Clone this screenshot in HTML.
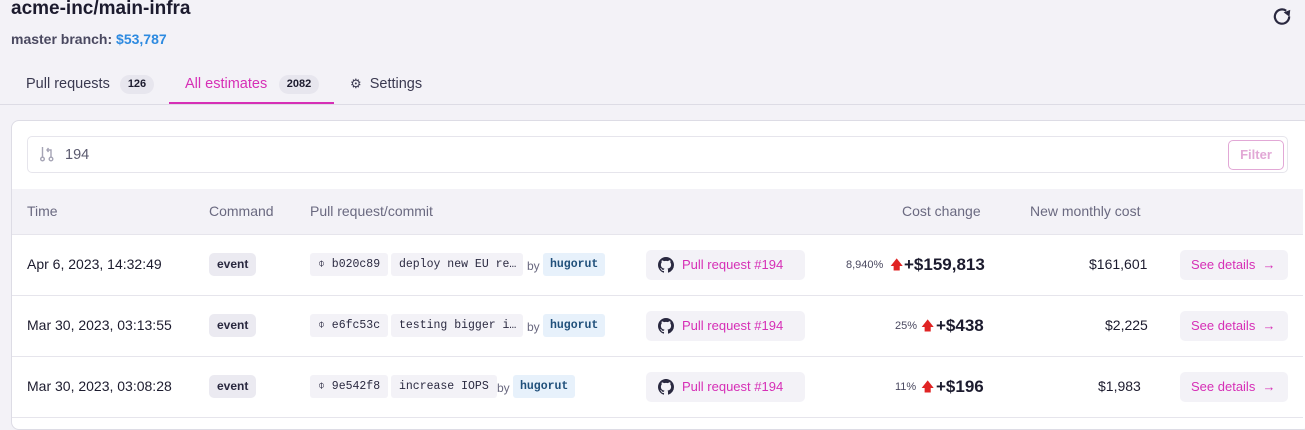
<!DOCTYPE html>
<html><head><style>
*{box-sizing:border-box;margin:0;padding:0}
body{width:1305px;height:420px;overflow:hidden;background:#f3f2f7;font-family:"Liberation Sans",sans-serif;color:#1c1b2e;position:relative}
.a{position:absolute;white-space:nowrap}
.mono{font-family:"Liberation Mono",monospace;font-size:11.5px;color:#2a2940}
.chip{position:absolute;background:#f3f2f7;border-radius:3px;height:23px;line-height:23px;padding:0 8px;white-space:nowrap;overflow:hidden}
.user{position:absolute;background:#e7f1fb;color:#1f4f7a;border-radius:3px;height:23px;line-height:23px;padding:0 7px;font-family:"Liberation Mono",monospace;font-size:11.5px;font-weight:bold}
.ev{position:absolute;left:209px;background:#ebeaf1;border-radius:5px;height:23px;line-height:23px;padding:0 8px;font-size:12px;font-weight:bold;color:#2a2940}
.pr{position:absolute;left:646px;width:159px;height:30px;background:#f3f2f7;border-radius:5px;color:#d62fb6;font-size:13px;line-height:30px;padding-left:36px}
.pr svg{position:absolute;left:12px;top:7px}
.sd{position:absolute;left:1180px;width:108px;height:30px;background:#f3f2f7;border-radius:5px;color:#d62fb6;font-size:13px;line-height:30px;padding-left:11px}
.row{position:absolute;left:12px;width:1291px;border-top:1px solid #e6e5ec}
</style></head><body>
<div class="a" style="left:11px;top:-2px;font-size:19px;font-weight:bold;color:#1c1b2e">acme-inc/main-infra</div>
<div class="a" style="left:11px;top:31px;font-size:14px;font-weight:bold;color:#4a4960">master branch: <span style="color:#2d8ae0">$53,787</span></div>
<svg class="a" style="left:1271px;top:6px" width="22" height="22" viewBox="0 0 20 20"><path d="M16.5 9.5A6.5 6.5 0 1 1 13.8 4.3" fill="none" stroke="#2a2940" stroke-width="2"/><path d="M11.5 5.8L17.5 3.5L16.8 9.8Z" fill="#2a2940"/></svg>
<div class="a" style="left:26px;top:76px;font-size:14.5px;color:#3a3950">Pull requests</div>
<div class="a" style="left:120px;top:75px;width:34px;height:19px;border-radius:10px;background:#e7e6ee;font-size:11px;font-weight:bold;text-align:center;line-height:19px">126</div>
<div class="a" style="left:185px;top:76px;font-size:14.5px;color:#d62fb6">All estimates</div>
<div class="a" style="left:279px;top:75px;width:40px;height:19px;border-radius:10px;background:#e7e6ee;font-size:11px;font-weight:bold;text-align:center;line-height:19px">2082</div>
<div class="a" style="left:169px;top:102px;width:165px;height:3px;background:#d62fb6"></div>
<div class="a" style="left:350px;top:76px;font-size:14.5px;color:#3a3950"><span style="font-size:13px">⚙</span>&nbsp; Settings</div>
<div class="a" style="left:0;top:104px;width:1305px;height:1px;background:#dddce5"></div>
<div class="a" style="left:11px;top:120px;width:1300px;height:310px;background:#fff;border:1px solid #dddce5;border-radius:8px"></div>
<div class="a" style="left:27px;top:136px;width:1261px;height:37px;border:1px solid #e6e5ec;border-radius:5px;background:#fff"></div>
<svg class="a" style="left:39px;top:145px" width="16" height="18" viewBox="0 0 16 18"><g fill="none" stroke="#a5a4b5" stroke-width="1.4"><circle cx="3.5" cy="14" r="1.8"/><circle cx="12" cy="14" r="1.8"/><path d="M3.5 2v10M12 12V5H8M9.5 3L8 5l1.5 2"/></g></svg>
<div class="a" style="left:65px;top:147px;font-size:14.5px;color:#5a596e">194</div>
<div class="a" style="left:1228px;top:140px;width:56px;height:30px;border:1px solid #e2a8d6;border-radius:5px;color:#e2a8d6;font-size:13px;font-weight:bold;text-align:center;line-height:28px">Filter</div>
<div class="a" style="left:12px;top:189px;width:1291px;height:45px;background:#f3f2f7"></div>
<div class="a" style="top:203px;left:27px;font-size:14px;color:#6a6980">Time</div>
<div class="a" style="top:203px;left:209px;font-size:14px;color:#6a6980">Command</div>
<div class="a" style="top:203px;left:310px;font-size:14px;color:#6a6980">Pull request/commit</div>
<div class="a" style="top:203px;left:902px;font-size:14px;color:#6a6980">Cost change</div>
<div class="a" style="top:203px;left:1030px;font-size:14px;color:#6a6980">New monthly cost</div>
<div class="row" style="top:234px"></div><div class="row" style="top:295px"></div><div class="row" style="top:356px"></div><div class="row" style="top:417px"></div>

<!-- row1 -->
<div class="a" style="left:27px;top:256px;font-size:14px">Apr 6, 2023, 14:32:49</div>
<div class="ev" style="top:253px">event</div>
<div class="chip mono" style="left:310px;top:253px">⌽ b020c89</div>
<div class="chip mono" style="left:391px;top:253px;width:132px">deploy new EU re…</div>
<div class="a" style="left:527px;top:259px;font-size:12px;color:#6a6980">by</div>
<div class="user" style="left:543px;top:253px">hugorut</div>
<div class="pr" style="top:250px"><svg width="16" height="16" viewBox="0 0 16 16"><path fill="#2a2940" d="M8 0C3.58 0 0 3.58 0 8c0 3.54 2.29 6.53 5.47 7.59.4.07.55-.17.55-.38v-1.33c-2.23.48-2.7-1.07-2.7-1.07-.36-.92-.89-1.17-.89-1.170-.73-.5.05-.49.05-.49.8.06 1.23.82 1.23.82.71 1.22 1.87.87 2.33.66.07-.52.28-.87.51-1.07-1.78-.2-3.64-.89-3.64-3.95 0-.87.31-1.590.82-2.15-.08-.2-.36-1.02.08-2.12 0 0 .67-.21 2.2.82A7.6 7.6 0 0 1 8 3.87c.68 0 1.36.09 2 .27 1.53-1.04 2.2-.82 2.2-.82.44 1.1.16 1.92.08 2.12.51.56.82 1.27.82 2.15 0 3.07-1.87 3.75-3.65 3.95.29.25.54.73.54 1.48v2.2c0 .21.15.46.55.38A8 8 0 0 0 16 8c0-4.42-3.58-8-8-8z"/></svg>Pull request #194</div>
<div class="a" style="left:846px;top:259px;font-size:11px;color:#4a4960">8,940%</div>
<div class="a" style="left:890px;top:256px;font-size:13px;color:#e02424">🡅</div>
<div class="a" style="left:904px;top:255px;font-size:17px;font-weight:bold">+$159,813</div>
<div class="a" style="left:1089px;top:256px;font-size:14px">$161,601</div>
<div class="sd" style="top:250px">See details &nbsp;→</div>

<!-- row2 -->
<div class="a" style="left:27px;top:317px;font-size:14px">Mar 30, 2023, 03:13:55</div>
<div class="ev" style="top:314px">event</div>
<div class="chip mono" style="left:310px;top:314px">⌽ e6fc53c</div>
<div class="chip mono" style="left:391px;top:314px;width:132px">testing bigger i…</div>
<div class="a" style="left:527px;top:320px;font-size:12px;color:#6a6980">by</div>
<div class="user" style="left:543px;top:314px">hugorut</div>
<div class="pr" style="top:311px"><svg width="16" height="16" viewBox="0 0 16 16"><path fill="#2a2940" d="M8 0C3.58 0 0 3.58 0 8c0 3.54 2.29 6.53 5.47 7.59.4.07.55-.17.55-.38v-1.33c-2.23.48-2.7-1.07-2.7-1.07-.36-.92-.89-1.17-.89-1.17-.73-.5.05-.49.05-.49.8.06 1.23.82 1.23.82.71 1.22 1.87.87 2.33.66.07-.52.28-.87.51-1.07-1.78-.2-3.64-.89-3.64-3.95 0-.87.31-1.59.82-2.15-.08-.2-.36-1.02.08-2.12 0 0 .67-.21 2.2.82A7.6 7.6 0 0 1 8 3.87c.68 0 1.36.09 2 .27 1.53-1.04 2.2-.82 2.2-.82.44 1.1.16 1.92.08 2.12.51.56.82 1.27.82 2.15 0 3.07-1.87 3.75-3.65 3.95.29.25.54.73.54 1.48v2.2c0 .21.15.46.55.38A8 8 0 0 0 16 8c0-4.42-3.58-8-8-8z"/></svg>Pull request #194</div>
<div class="a" style="left:895px;top:320px;font-size:11px;color:#4a4960">25%</div>
<div class="a" style="left:921px;top:317px;font-size:13px;color:#e02424">🡅</div>
<div class="a" style="left:936px;top:316px;font-size:17px;font-weight:bold">+$438</div>
<div class="a" style="left:1105px;top:317px;font-size:14px">$2,225</div>
<div class="sd" style="top:311px">See details &nbsp;→</div>

<!-- row3 -->
<div class="a" style="left:27px;top:378px;font-size:14px">Mar 30, 2023, 03:08:28</div>
<div class="ev" style="top:375px">event</div>
<div class="chip mono" style="left:310px;top:375px">⌽ 9e542f8</div>
<div class="chip mono" style="left:391px;top:375px">increase IOPS</div>
<div class="a" style="left:497px;top:381px;font-size:12px;color:#6a6980">by</div>
<div class="user" style="left:513px;top:375px">hugorut</div>
<div class="pr" style="top:372px"><svg width="16" height="16" viewBox="0 0 16 16"><path fill="#2a2940" d="M8 0C3.58 0 0 3.58 0 8c0 3.54 2.29 6.53 5.47 7.59.4.07.55-.17.55-.38v-1.33c-2.23.48-2.7-1.07-2.7-1.07-.36-.92-.89-1.17-.89-1.17-.73-.5.05-.49.05-.49.8.06 1.23.82 1.23.82.71 1.22 1.87.87 2.33.66.07-.52.28-.87.51-1.07-1.78-.2-3.64-.89-3.64-3.95 0-.87.31-1.59.82-2.15-.08-.2-.36-1.02.08-2.12 0 0 .67-.21 2.2.82A7.6 7.6 0 0 1 8 3.87c.68 0 1.36.09 2 .27 1.53-1.04 2.2-.82 2.2-.82.44 1.1.16 1.92.08 2.12.51.56.82 1.27.82 2.15 0 3.07-1.87 3.75-3.65 3.95.29.25.54.73.54 1.48v2.2c0 .21.15.46.55.38A8 8 0 0 0 16 8c0-4.42-3.58-8-8-8z"/></svg>Pull request #194</div>
<div class="a" style="left:895px;top:381px;font-size:11px;color:#4a4960">11%</div>
<div class="a" style="left:921px;top:378px;font-size:13px;color:#e02424">🡅</div>
<div class="a" style="left:936px;top:377px;font-size:17px;font-weight:bold">+$196</div>
<div class="a" style="left:1098px;top:378px;font-size:14px">$1,983</div>
<div class="sd" style="top:372px">See details &nbsp;→</div>
</body></html>
